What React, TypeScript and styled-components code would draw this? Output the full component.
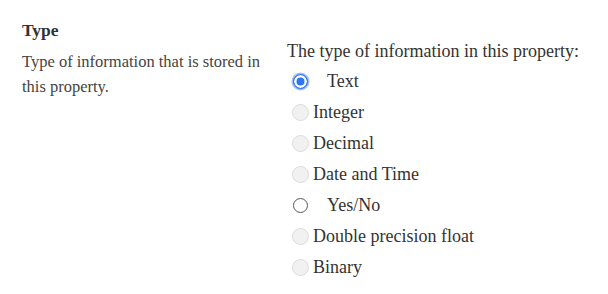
import React from "react";
import styled, { createGlobalStyle } from "styled-components";

const GlobalStyle = createGlobalStyle`
  html, body {
    margin: 0;
    padding: 0;
    background: #ffffff;
  }
  body {
    font-family: "Liberation Serif", "Times New Roman", serif;
    color: #333333;
  }
`;

const Page = styled.div`
  display: flex;
  padding: 19px 0 0 22px;
  width: 608px;
  height: 294px;
  box-sizing: border-box;
`;

const Info = styled.div`
  width: 265px;
  flex-shrink: 0;
`;

const Title = styled.h3`
  margin: 0 0 8px;
  font-size: 17.5px;
  font-weight: bold;
  line-height: 22px;
  color: #333;
`;

const Description = styled.p`
  margin: 0;
  font-size: 16.5px;
  line-height: 25px;
  width: 250px;
  color: #444;
`;

const Field = styled.div`
  padding-top: 20px;
  display: flex;
  flex-direction: column;
`;

const Prompt = styled.div`
  font-size: 18px;
  line-height: 24px;
  margin-bottom: 3px;
  color: #333;
`;

const Option = styled.label`
  display: flex;
  align-items: center;
  height: 31px;
  font-size: 18px;
  padding-left: 5px;
  color: #333;
`;

const Radio = styled.span<{ $checked?: boolean; $disabled?: boolean }>`
  width: ${(p) => (p.$disabled ? 17 : 15)}px;
  height: ${(p) => (p.$disabled ? 17 : 15)}px;
  box-sizing: border-box;
  border-radius: 50%;
  flex-shrink: 0;
  margin-right: ${(p) => (p.$disabled ? 4 : 19)}px;
  margin-left: ${(p) => (p.$disabled ? 0 : 1)}px;
  background: ${(p) =>
    p.$checked ? "#2f74f0" : p.$disabled ? "#f1f1f1" : "#ffffff"};
  border: ${(p) =>
    p.$checked
      ? "1px solid #2f74f0"
      : p.$disabled
      ? "1px solid #dcdcdc"
      : "1.5px solid #555"};
  box-shadow: ${(p) => (p.$checked ? "inset 0 0 0 2.5px #ffffff, 0 0 0 1.5px #9cc0fa" : "none")};
`;

interface Choice {
  label: string;
  checked?: boolean;
  disabled?: boolean;
}

const choices: Choice[] = [
  { label: "Text", checked: true },
  { label: "Integer", disabled: true },
  { label: "Decimal", disabled: true },
  { label: "Date and Time", disabled: true },
  { label: "Yes/No" },
  { label: "Double precision float", disabled: true },
  { label: "Binary", disabled: true },
];

const App: React.FC = () => {
  return (
    <>
      <GlobalStyle />
      <Page>
        <Info>
          <Title>Type</Title>
          <Description>Type of information that is stored in this property.</Description>
        </Info>
        <Field>
          <Prompt>The type of information in this property:</Prompt>
          {choices.map((c) => (
            <Option key={c.label}>
              <Radio $checked={c.checked} $disabled={c.disabled} />
              {c.label}
            </Option>
          ))}
        </Field>
      </Page>
    </>
  );
};

export default App;
